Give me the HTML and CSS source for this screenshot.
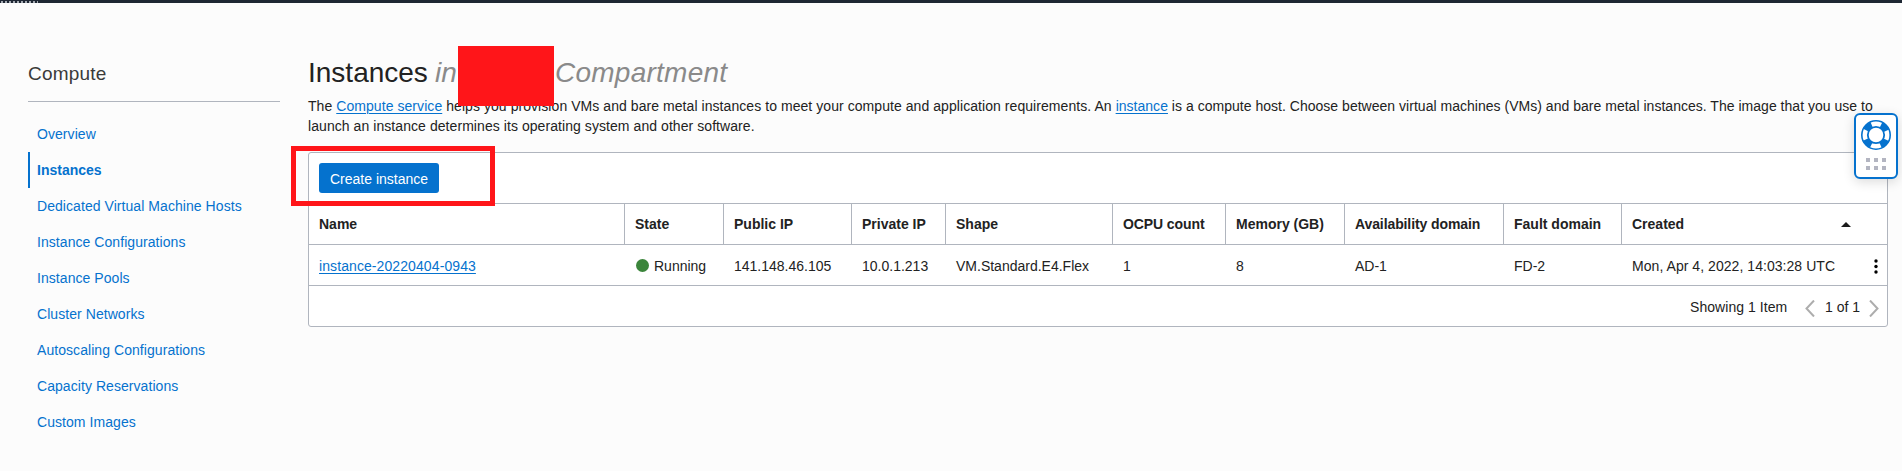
FILE: index.html
```html
<!DOCTYPE html>
<html lang="en">
<head>
<meta charset="utf-8">
<title>Instances</title>
<link rel="stylesheet" href="styles.css">
</head>
<body>
<div class="topbar"><div class="ticks"></div></div>
<div class="layout">
  <nav class="sidebar">
    <h2 class="side-title">Compute</h2>
    <ul class="side-list">
      <li><a>Overview</a></li>
      <li class="active"><a>Instances</a></li>
      <li><a>Dedicated Virtual Machine Hosts</a></li>
      <li><a>Instance Configurations</a></li>
      <li><a>Instance Pools</a></li>
      <li><a>Cluster Networks</a></li>
      <li><a>Autoscaling Configurations</a></li>
      <li><a>Capacity Reservations</a></li>
      <li><a>Custom Images</a></li>
    </ul>
  </nav>
  <main class="content">
    <h1 class="title"><span class="name">Instances</span><em class="in">in</em><em class="comp">Compartment</em></h1>
    <p class="intro"><span class="l1">The <a>Compute service</a> helps you provision VMs and bare metal instances to meet your compute and application requirements. An </span><span class="l1b"><a>instance</a> is a compute host. Choose between virtual machines (VMs) and bare metal instances. The image that you use to</span><br><span class="l2">launch an instance determines its operating system and other software.</span></p>
    <section class="card">
      <div class="toolbar"><button class="create">Create instance</button></div>
      <div class="row head">
        <div>Name</div><div>State</div><div>Public IP</div><div>Private IP</div><div>Shape</div><div class="tight">OCPU count</div><div>Memory (GB)</div><div class="tight">Availability domain</div><div>Fault domain</div>
        <div class="created">Created<svg width="10" height="5" viewBox="0 0 10 5"><path d="M0 5 L5 0 L10 5Z" fill="#1b1b1b"/></svg></div>
      </div>
      <div class="row data">
        <div><a>instance-20220404-0943</a></div><div class="state"><i class="dot"></i>Running</div><div>141.148.46.105</div><div>10.0.1.213</div><div>VM.Standard.E4.Flex</div><div>1</div><div>8</div><div>AD-1</div><div>FD-2</div>
        <div class="created"><span class="date">Mon, Apr 4, 2022, 14:03:28 UTC</span><svg class="kebab" width="4" height="15" viewBox="0 0 4 15"><g fill="#000"><circle cx="2" cy="2" r="1.7"/><circle cx="2" cy="7.5" r="1.7"/><circle cx="2" cy="13" r="1.7"/></g></svg></div>
      </div>
      <div class="pager">
        <span class="showing">Showing 1 Item</span>
        <svg class="prev" width="10" height="17" viewBox="0 0 10 17"><path d="M9 .5 L1.5 8.5 L9 16.5" fill="none" stroke="#adadad" stroke-width="2"/></svg>
        <span class="pages">1 of 1</span>
        <svg class="next" width="10" height="17" viewBox="0 0 10 17"><path d="M1 .5 L8.5 8.5 L1 16.5" fill="none" stroke="#adadad" stroke-width="2"/></svg>
      </div>
    </section>
  </main>
</div>
<div class="redaction"></div>
<div class="highlight"></div>
<div class="help">
  <svg width="30" height="30" viewBox="0 0 30 30"><circle cx="15" cy="15" r="11.2" fill="none" stroke="#0572ce" stroke-width="6" stroke-dasharray="8 9.593" stroke-dashoffset="-4.8"/><circle cx="15" cy="15" r="14.2" fill="none" stroke="#0572ce" stroke-width="1.6"/><circle cx="15" cy="15" r="8.2" fill="none" stroke="#0572ce" stroke-width="1.8"/></svg>
  <svg width="20" height="12" viewBox="0 0 20 12"><path d="M0 0h4v4H0zM8 0h4v4H8zM16 0h4v4h-4zM0 8h4v4H0zM8 8h4v4H8zM16 8h4v4h-4z" fill="#b3b5c1"/></svg>
</div>
</body>
</html>
```
FILE: styles.css
```css
* { box-sizing: border-box; }
body { margin: 0; height: 471px; overflow: hidden; background: #fcfcfc; color: #222; font: 14px/20px "Liberation Sans", Arial, sans-serif; }
a { color: #0572ce; }
.topbar { height: 3px; background: #1e2733; padding: 1px 0 0 1px; }
.ticks { width: 37px; height: 2px; background: repeating-linear-gradient(90deg, #a4aab2 0 2px, transparent 2px 4px); }
.layout { display: flex; padding-left: 28px; }
.sidebar { width: 252px; margin-right: 28px; }
.side-title { margin: 0; height: 99px; padding-top: 59px; border-bottom: 1px solid #b0b5be; font-size: 19px; line-height: 24px; font-weight: 400; letter-spacing: .2px; color: #3a3a3a; }
.side-list { list-style: none; margin: 14px 0 0; padding: 0; }
.side-list li { height: 36px; padding: 8px 0 0 9px; line-height: 20px; white-space: nowrap; letter-spacing: .06px; }
.side-list .active { border-left: 2px solid #0572ce; padding-left: 7px; font-weight: 700; letter-spacing: 0; }
.content { width: 1580px; }
.title { display: flex; margin: 53px 0 0; height: 40px; font-size: 28px; line-height: 33px; font-weight: 400; }
.name { width: 127px; }
.title em { color: #8a8a8a; }
.in { width: 120px; }
.comp { letter-spacing: .25px; }
.intro { margin: 0; height: 56px; white-space: nowrap; }
.intro a, .data a { text-decoration: underline; text-decoration-thickness: 1px; text-underline-offset: 2px; }
.l1 { letter-spacing: .062px; }
.l1b { letter-spacing: .022px; }
.l2 { letter-spacing: .066px; }
.card { height: 175px; border: 1px solid #b0b5be; border-radius: 3px; background: #fff; }
.toolbar { height: 50px; padding: 10px; }
.create { display: block; width: 120px; height: 30px; padding: 2px 0 0; border: 0; border-radius: 3px; background: #0572ce; color: #fff; font: inherit; white-space: nowrap; }
.row { display: grid; grid-template-columns: 315px 99px 128px 94px 167px 113px 119px 159px 118px 1fr; height: 41px; border-top: 1px solid #b0b5be; white-space: nowrap; }
.row > div { padding: 10px 0 0 10px; }
.head { font-weight: 700; }
.head > div + div { border-left: 1px solid #b0b5be; }
.head .tight { letter-spacing: -.1px; }
.data > div { padding-top: 11px; }
.data > div + div { padding-left: 11px; }
.data a { letter-spacing: .09px; }
.date { letter-spacing: .05px; }
.created { display: flex; justify-content: space-between; }
.head .created svg { margin: 8px 36px 0 0; }
.data .created { padding-right: 9px; }
.kebab { margin-top: 3px; }
.state { display: flex; }
.dot { width: 13px; height: 13px; margin: 3px 5px 0 0; border-radius: 50%; background: #3b853b; }
.data .state { padding-left: 12px; }
.pager { display: flex; justify-content: flex-end; height: 41px; padding: 11px 8px 0 0; border-top: 1px solid #b0b5be; }
.pager svg { margin-top: 3px; }
.showing { width: 98px; margin-right: 17px; white-space: nowrap; letter-spacing: .06px; }
.pages { width: 35px; margin: 0 9px 0 10px; white-space: nowrap; }
.redaction { position: absolute; left: 458px; top: 46px; width: 96px; height: 60px; background: #ff1519; }
.highlight { position: absolute; left: 291px; top: 146px; width: 204px; height: 60px; border: 5px solid #ff1519; }
.help { position: absolute; left: 1854px; top: 113px; width: 44px; height: 66px; border: 2px solid #0572ce; border-radius: 6px; background: #fff; box-shadow: 0 3px 12px rgba(0,0,0,.14); display: flex; flex-direction: column; align-items: center; gap: 8px; padding-top: 5px; }
.help svg { flex: none; overflow: visible; }
```
